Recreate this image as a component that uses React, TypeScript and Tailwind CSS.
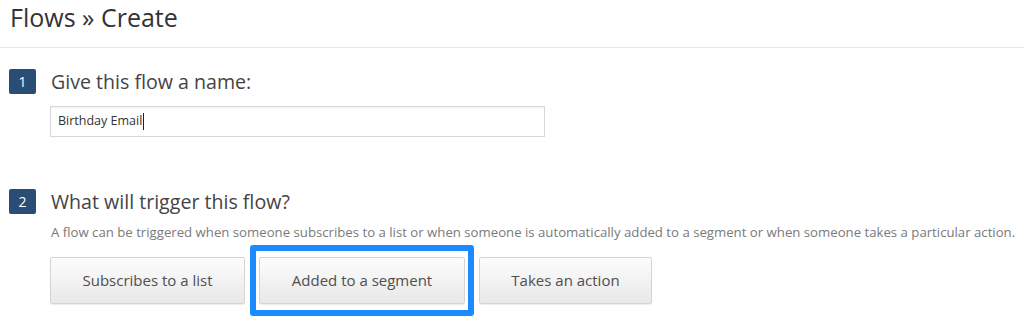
import React from "react";

const font = { fontFamily: "'Open Sans', Lato, sans-serif" };

function StepBadge({ n }: { n: number }) {
  return (
    <div className="flex h-[25px] w-[27px] shrink-0 items-center justify-center rounded-[2px] bg-[#294d74] text-[14px] leading-none text-white">
      {n}
    </div>
  );
}

function TriggerButton({ label }: { label: string }) {
  return (
    <button className="flex h-[47px] w-full items-center justify-center rounded-[2px] border border-[#d4d4d4] bg-gradient-to-b from-[#fdfdfd] to-[#e8e8e8] text-[15px] text-[#4f4f4f] shadow-[0_1px_1px_rgba(0,0,0,0.08)]">
      {label}
    </button>
  );
}

export default function App() {
  return (
    <div className="h-[324px] w-[1024px] overflow-hidden bg-white" style={font}>
      <div className="flex h-[48px] items-start border-b border-[#e8e8e8] pl-[10px] pt-[1px]">
        <h1 className="text-[25px] leading-[32px] text-[#333]">Flows » Create</h1>
      </div>

      <div className="pl-[9px] pt-[21px]">
        <div className="flex items-center gap-[15px]">
          <StepBadge n={1} />
          <span className="text-[19.6px] leading-[25px] text-[#444]">Give this flow a name:</span>
        </div>
        <div className="ml-[41px] mt-[12px] flex h-[31px] w-[495px] items-center border border-[#d6d6d6] px-[7px] text-[12.5px] text-[#333] shadow-[inset_0_1px_1px_rgba(0,0,0,0.05)]">
          Birthday Email<span className="ml-[1px] h-[17px] w-px bg-[#222]" />
        </div>

        <div className="mt-[52px] flex items-center gap-[15px]">
          <StepBadge n={2} />
          <span className="text-[19.6px] leading-[25px] text-[#444]">What will trigger this flow?</span>
        </div>
        <p className="ml-[42px] mt-[9px] whitespace-nowrap text-[13.2px] leading-[18px] text-[#7a7a7a]">
          A flow can be triggered when someone subscribes to a list or when someone is automatically added to a segment or when someone takes a particular action.
        </p>

        <div className="ml-[41px] mt-[4px] flex items-center">
          <div className="w-[195px]">
            <TriggerButton label="Subscribes to a list" />
          </div>
          <div className="ml-[5px] rounded-[3px] border-[6px] border-[#1a8cff] px-[3px] py-[6px]">
            <div className="w-[206px]">
              <TriggerButton label="Added to a segment" />
            </div>
          </div>
          <div className="ml-[5px] w-[173px]">
            <TriggerButton label="Takes an action" />
          </div>
        </div>
      </div>
    </div>
  );
}
